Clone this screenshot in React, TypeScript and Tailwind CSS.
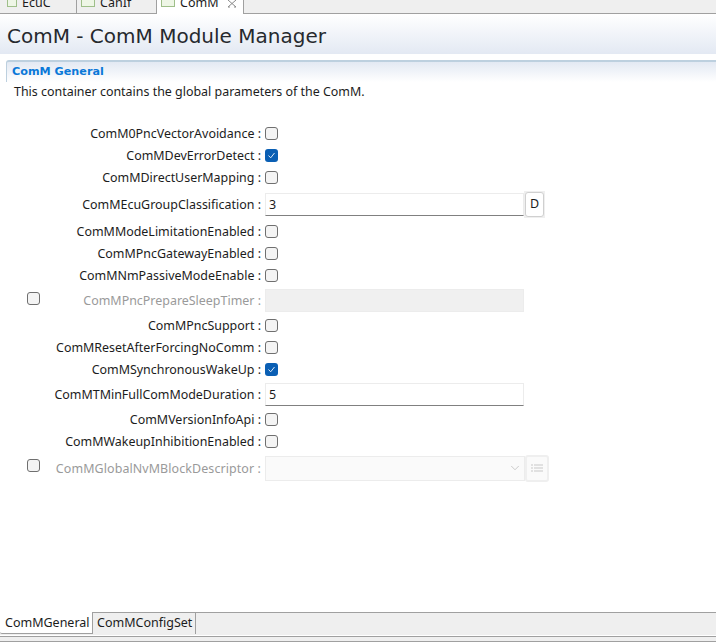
import type { ReactNode } from "react"
import { ChevronDown } from "lucide-react"

const UI = "font-['Noto_Sans',sans-serif]"

function Check({ on }: { on?: boolean }) {
  if (on) {
    return (
      <span className="flex h-[13px] w-[13px] shrink-0 items-center justify-center rounded-[3px] bg-[#0a5fb4]">
        <svg width="9" height="9" viewBox="0 0 9 9" fill="none" stroke="#dbe9f7" strokeWidth="1">
          <path d="M1.5 4.5 L3.7 6.8 L7.5 2" />
        </svg>
      </span>
    )
  }
  return <span className="h-[13px] w-[13px] shrink-0 rounded-[3px] border border-[#6f6f6f] bg-[#f4f4f4]" />
}

function Row({
  label,
  height,
  disabled,
  labelClass,
  checkClass,
  children,
}: {
  label: string
  height: string
  disabled?: boolean
  labelClass?: string
  checkClass?: string
  children: ReactNode
}) {
  return (
    <div className={`grid grid-cols-[262px_1fr] items-center gap-x-[3px] ${height}`}>
      <div className="flex items-center justify-between pl-[27px] pr-[1px]">
        {disabled ? (
          <span className={`flex ${checkClass ?? ""}`}>
            <Check />
          </span>
        ) : (
          <span />
        )}
        <span
          className={`whitespace-nowrap pt-[2px] text-[12.45px] ${disabled ? "text-[#9a9a9a]" : "text-[#1c1c1c]"} ${labelClass ?? ""}`}
        >
          {label} :
        </span>
      </div>
      <div className="flex items-center">{children}</div>
    </div>
  )
}

function TopTabs() {
  return (
    <div className="flex h-[14px] shrink-0 border-b border-[#a0a0a0] bg-[#efefef] text-[12.5px] leading-[18px] text-[#1c1c1c]">
      <div className="flex w-[77px] items-start overflow-hidden border-r border-[#a0a0a0] pl-[7px]">
        <span className="-mt-[5px] h-[12px] w-[10px] shrink-0 border border-[#9fbf8a] bg-[#eef6e6]" />
        <span className="-mt-[6px] ml-[5px]">EcuC</span>
      </div>
      <div className="flex w-[80px] items-start overflow-hidden border-r border-[#a0a0a0] pl-[4px]">
        <span className="-mt-[5px] h-[12px] w-[14px] shrink-0 border border-[#9fbf8a] bg-[#eef6e6]" />
        <span className="-mt-[6px] ml-[5px]">CanIf</span>
      </div>
      <div className="-mb-px flex h-[14px] w-[87px] items-start overflow-hidden border-r border-[#a0a0a0] bg-white pl-[4px]">
        <span className="-mt-[5px] h-[12px] w-[14px] shrink-0 border border-[#9fbf8a] bg-[#eef6e6]" />
        <span className="-mt-[6px] ml-[5px]">ComM</span>
        <svg width="10" height="8" viewBox="0 0 10 8" fill="none" stroke="#8a8a8a" strokeWidth="1" className="ml-[8px] shrink-0">
          <path d="M1 0 L9 7 M9 0 L1 7 M1 7 L3 7 M9 7 L7 7" />
        </svg>
      </div>
    </div>
  )
}

export default function App() {
  return (
    <div className={`flex h-[642px] w-[716px] flex-col overflow-hidden bg-white ${UI}`}>
      <TopTabs />

      <div className="flex h-[40px] shrink-0 items-center bg-gradient-to-b from-white to-[#e3e9f3] pl-[7px] pt-[3px] font-['DejaVu_Sans',sans-serif] text-[20px] text-[#26292e]">
        ComM - ComM Module Manager
      </div>

      <div className="ml-[6px] mt-[6px] h-[22px] shrink-0 rounded-tl-[3px] border-l border-t-2 border-[#bdd0df] bg-gradient-to-b from-[#e3e9f3] to-white pl-[5px] pt-[1px] font-['DejaVu_Sans',sans-serif] text-[11.2px] font-bold leading-[18px] text-[#0a78d8]">
        ComM General
      </div>
      <p className="ml-[14px] shrink-0 pt-[1px] text-[12.45px] leading-[18px] text-[#1c1c1c]">
        This container contains the global parameters of the ComM.
      </p>

      <div className="mt-[21px] flex flex-1 flex-col">
        <Row label="ComM0PncVectorAvoidance" height="h-[22px]"><Check /></Row>
        <Row label="ComMDevErrorDetect" height="h-[22px]"><Check on /></Row>
        <Row label="ComMDirectUserMapping" height="h-[22px]"><Check /></Row>
        <Row label="ComMEcuGroupClassification" height="h-[32px]">
          <div className="flex h-[23px] w-[259px] items-center border border-[#ececec] border-b-[#808080] pl-[3px] pt-[2px] text-[12.5px] text-[#1c1c1c]">3</div>
          <div className="flex h-[27px] w-[21px] items-center justify-center bg-[#efefef]">
            <div className="flex h-[25px] w-[19px] items-center justify-center rounded-[3px] border border-[#d0d0d0] bg-white text-[12.5px] text-[#1c1c1c]">D</div>
          </div>
        </Row>
        <Row label="ComMModeLimitationEnabled" height="h-[22px]"><Check /></Row>
        <Row label="ComMPncGatewayEnabled" height="h-[22px]"><Check /></Row>
        <Row label="ComMNmPassiveModeEnable" height="h-[22px]"><Check /></Row>
        <Row label="ComMPncPrepareSleepTimer" height="h-[28px]" disabled checkClass="-mt-[2px]">
          <div className="h-[23px] w-[259px] border border-[#ececec] bg-[#f0f0f0]" />
        </Row>
        <Row label="ComMPncSupport" height="h-[22px]"><Check /></Row>
        <Row label="ComMResetAfterForcingNoComm" height="h-[22px]"><Check /></Row>
        <Row label="ComMSynchronousWakeUp" height="h-[22px]"><Check on /></Row>
        <Row label="ComMTMinFullComModeDuration" height="h-[28px]">
          <div className="flex h-[23px] w-[259px] items-center border border-[#ececec] border-b-[#808080] pl-[3px] pt-[2px] text-[12.5px] text-[#1c1c1c]">5</div>
        </Row>
        <Row label="ComMVersionInfoApi" height="h-[22px]"><Check /></Row>
        <Row label="ComMWakeupInhibitionEnabled" height="h-[22px]"><Check /></Row>
        <Row label="ComMGlobalNvMBlockDescriptor" height="h-[32px]" disabled labelClass="tracking-[0.1px]" checkClass="-mt-[5px]">
          <div className="flex h-[25px] w-[260px] items-center justify-end border border-[#ececec] bg-[#fafafa] pr-[2px]">
            <ChevronDown size={14} strokeWidth={1} color="#a8a8a8" />
          </div>
          <div className="flex h-[27px] w-[24px] items-center justify-center rounded-[3px] border-2 border-[#efefef] bg-[#fafafa]">
            <svg width="12" height="8" viewBox="0 0 12 8" fill="none" stroke="#c8c8c8">
              <path d="M0 1 H2 M3 1 H12 M0 4 H2 M3 4 H12 M0 7 H2 M3 7 H12" />
            </svg>
          </div>
        </Row>
      </div>

      <div className="flex h-[23px] shrink-0 border-t border-[#a0a0a0] bg-[#efefef] text-[12.5px] text-[#1c1c1c]">
        <div className="-mt-px h-[22px] w-[93px] rounded-bl-[2px] border-b border-r border-[#a0a0a0] bg-white pl-[5px] leading-[21px]">ComMGeneral</div>
        <div className="h-[21px] w-[103px] border-r border-[#a0a0a0] pl-[4px] leading-[20px]">ComMConfigSet</div>
      </div>
      <div className="h-[1px] shrink-0 bg-white" />
      <div className="h-[6px] shrink-0 border-y border-[#a0a0a0] bg-[#efefef]" />
    </div>
  )
}
